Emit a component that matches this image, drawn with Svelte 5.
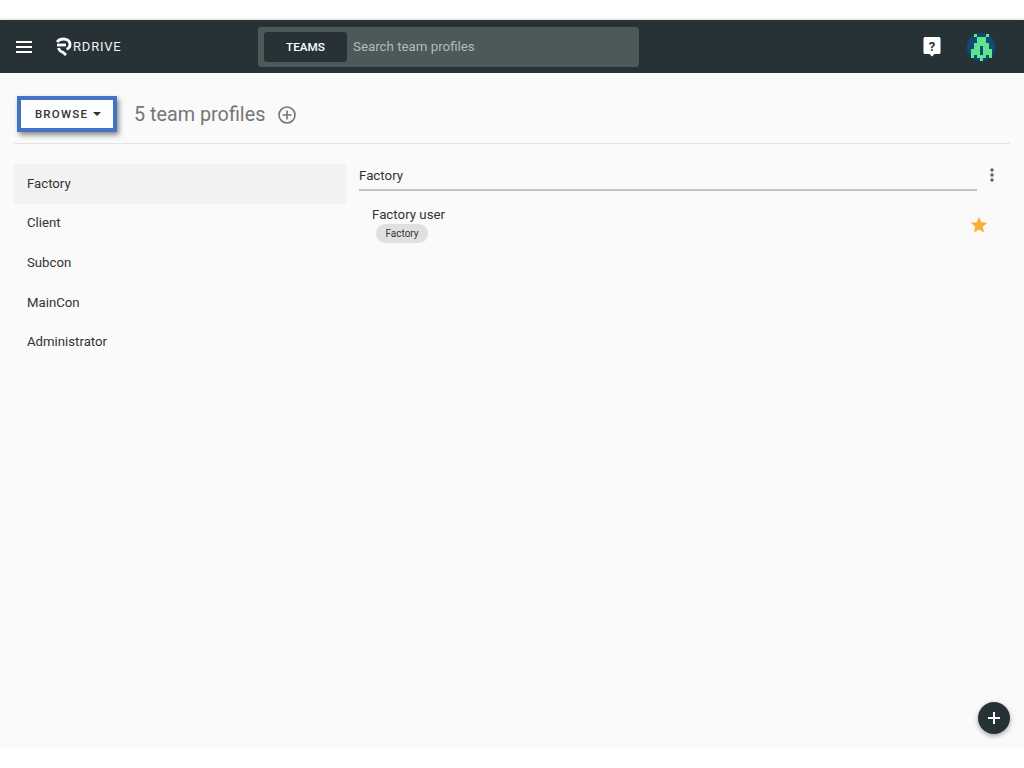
<script lang="ts">
  const groups = ['Factory', 'Client', 'Subcon', 'MainCon', 'Administrator']
  let selected = $state('Factory')

  // avatar sprite, one string per row of 3px cells
  const sprite = [
    '..#...#..',
    '...###...',
    '...###...',
    '..#####..',
    '..##.##..',
    '.###.###.',
    '.###.###.',
    '.#.###.#.',
    '....#....'
  ]
  const cells = sprite.flatMap((row, y) =>
    [...row].map((c, x) => ({ c, x, y })).filter((p) => p.c === '#')
  )
</script>

<div class="page">
  <header class="topbar">
    <button class="menu" aria-label="Menu">
      <svg width="24" height="24" viewBox="0 0 24 24"><path d="M4 18h16v-2H4zm0-5h16v-2H4zm0-7v2h16V6z" fill="#fff" /></svg>
    </button>
    <div class="logo">
      <svg width="17" height="19" viewBox="0 0 17 19" fill="none" stroke="#fff" stroke-width="2.800">
        <path d="M1 5C2.500 3 4.500 2 7.500 2c3.500 0 6.500 2 6.500 5.500 0 2.500-1.500 4-3.500 4.800" />
        <path d="M1 8h9" />
        <path d="M2.500 11c0.500 2.200 2 3.600 4.500 4.300l3 2.700" />
      </svg>
      <span>RDRIVE</span>
    </div>
    <div class="search">
      <span class="scope">TEAMS</span>
      <span class="placeholder">Search team profiles</span>
    </div>
    <div class="right">
      <svg class="help" width="18" height="21" viewBox="0 0 18 21">
        <path d="M2 1h14a1.500 1.500 0 0 1 1.500 1.500v14a1.500 1.500 0 0 1-1.500 1.500h-4.500L9 20.500 6.500 18H2a1.500 1.500 0 0 1-1.500-1.500v-14A1.500 1.500 0 0 1 2 1z" fill="#fff" />
        <text x="9" y="15" text-anchor="middle">?</text>
      </svg>
      <svg class="avatar" width="28" height="28" viewBox="0 0 28 28" shape-rendering="crispEdges">
        <circle cx="14" cy="14" r="14" fill="#0e4a72" shape-rendering="auto" />
        {#each cells as p}
          <rect x={p.x * 3 + 1} y={p.y * 3 + 1} width="3" height="3" fill="#5fe391" />
        {/each}
      </svg>
    </div>
  </header>

  <main class="content">
    <div class="heading">
      <button class="browse">BROWSE <i class="caret"></i></button>
      <h1>5 team profiles</h1>
      <svg class="add" width="20" height="20" viewBox="0 0 20 20" fill="none" stroke="#757575" stroke-width="1.600">
        <circle cx="10" cy="10" r="8" />
        <path d="M10 5.500v9M5.500 10h9" />
      </svg>
    </div>

    <div class="columns">
      <nav class="list">
        {#each groups as g}
          <button class="row" class:active={g === selected} onclick={() => (selected = g)}>{g}</button>
        {/each}
      </nav>
      <section class="detail">
        <div class="detail-head">
          <h2>{selected}</h2>
          <svg class="more" width="4" height="14" viewBox="0 0 4 14" fill="#616161">
            <circle cx="2" cy="2" r="1.700" /><circle cx="2" cy="7" r="1.700" /><circle cx="2" cy="12" r="1.700" />
          </svg>
        </div>
        <div class="member">
          <div>
            <div class="name">{selected} user</div>
            <span class="chip">{selected}</span>
          </div>
          <svg class="star" width="20" height="20" viewBox="0 0 24 24"><path d="M12 17.270 18.180 21l-1.640-7.030L22 9.240l-7.190-.61L12 2 9.190 8.630 2 9.240l5.460 4.730L5.820 21z" fill="#fbb034" /></svg>
        </div>
      </section>
    </div>

    <button class="fab" aria-label="Add">
      <svg width="16" height="16" viewBox="0 0 16 16"><path d="M8 2v12M2 8h12" stroke="#fff" stroke-width="2" /></svg>
    </button>
  </main>
</div>

<style>
  :global(body) {
    background: #fff;
    font-family: Roboto, "Liberation Sans", sans-serif;
  }
  button {
    font: inherit;
    border: 0;
    background: none;
    padding: 0;
  }
  h1, h2 {
    margin: 0;
    font-weight: 400;
  }
  .page {
    padding-top: 20px;
    height: 748px;
    box-sizing: border-box;
    display: flex;
    flex-direction: column;
  }
  .topbar {
    height: 53px;
    flex: none;
    background: #263235;
    box-shadow: 0 1px 4px rgba(0, 0, 0, 0.4);
    display: flex;
    align-items: center;
    position: relative;
    padding-left: 12px;
    color: #fff;
  }
  .menu {
    display: flex;
    width: 24px;
    margin-right: 20px;
  }
  .logo {
    display: flex;
    align-items: center;
    width: 202px;
    font-size: 13px;
    letter-spacing: 0.8px;
    color: #f2f4f4;
  }
  .search {
    width: 381px;
    height: 40px;
    background: #4d5858;
    border-radius: 3px;
    display: flex;
    align-items: center;
    padding-left: 6px;
    box-sizing: border-box;
  }
  .scope {
    width: 83px;
    height: 30px;
    line-height: 30px;
    text-align: center;
    background: #263235;
    border-radius: 3px;
    font-size: 11.700px;
    font-weight: 500;
  }
  .placeholder {
    margin: 0 0 1px 6px;
    font-size: 13.300px;
    color: #b4baba;
  }
  .right {
    margin-left: auto;
    display: flex;
    align-items: center;
    padding-right: 29px;
  }
  .help text {
    font: 700 13px Roboto, sans-serif;
    fill: #263235;
  }
  .avatar {
    margin-left: 26px;
  }
  .content {
    flex: 1;
    background: #fafafa;
    padding: 23px 14px 0;
    position: relative;
    display: flex;
    flex-direction: column;
  }
  .heading {
    display: flex;
    height: 47px;
    padding-left: 3px;
    border-bottom: 1px solid #e4e4e4;
    align-items: flex-start;
  }
  .browse {
    width: 100px;
    height: 36px;
    box-sizing: border-box;
    border: 4px solid #4472c4;
    background: #fdfdfd;
    box-shadow: 2px 3px 5px rgba(0, 0, 0, 0.45);
    font-size: 11.500px;
    font-weight: 500;
    letter-spacing: 1.200px;
    color: #333;
    display: flex;
    align-items: center;
    justify-content: center;
    gap: 5px;
    padding: 0 0 0 2px;
  }
  .caret {
    width: 0;
    height: 0;
    border: 4.500px solid transparent;
    border-top-color: #333;
    border-bottom: 0;
  }
  h1 {
    font-size: 19.800px;
    color: #757575;
    margin: 1px 0 0 17px;
    line-height: 36px;
  }
  .add {
    margin: 9px 0 0 12px;
  }
  .columns {
    display: grid;
    grid-template-columns: 332px 1fr;
    gap: 13px;
    margin-top: 20px;
  }
  .row {
    display: block;
    width: 100%;
    height: 39.600px;
    text-align: left;
    padding: 0 0 1px 13px;
    font-size: 13.200px;
    color: #333;
  }
  .row.active {
    background: #f2f2f2;
  }
  .detail {
    font-size: 13.300px;
    color: #333;
  }
  .detail-head {
    display: flex;
    align-items: flex-start;
    justify-content: space-between;
    padding-right: 16px;
  }
  .detail-head h2 {
    font-size: 13.300px;
    line-height: 24px;
    width: 618px;
    height: 25px;
    border-bottom: 2px solid #c4c4c4;
  }
  .more {
    margin-top: 4px;
  }
  .member {
    display: flex;
    justify-content: space-between;
    align-items: center;
    padding: 14px 21px 0 13px;
  }
  .star {
    margin-top: 2px;
  }
  .name {
    line-height: 19px;
  }
  .chip {
    display: inline-block;
    margin: 0 0 0 4px;
    width: 52px;
    height: 19px;
    line-height: 19px;
    text-align: center;
    background: #e0e0e0;
    border-radius: 10px;
    font-size: 10px;
  }
  .fab {
    position: absolute;
    right: 14px;
    bottom: 14px;
    width: 32px;
    height: 32px;
    border-radius: 50%;
    background: #263235;
    box-shadow: 0 2px 5px rgba(0, 0, 0, 0.35);
    display: flex;
    align-items: center;
    justify-content: center;
  }
</style>
